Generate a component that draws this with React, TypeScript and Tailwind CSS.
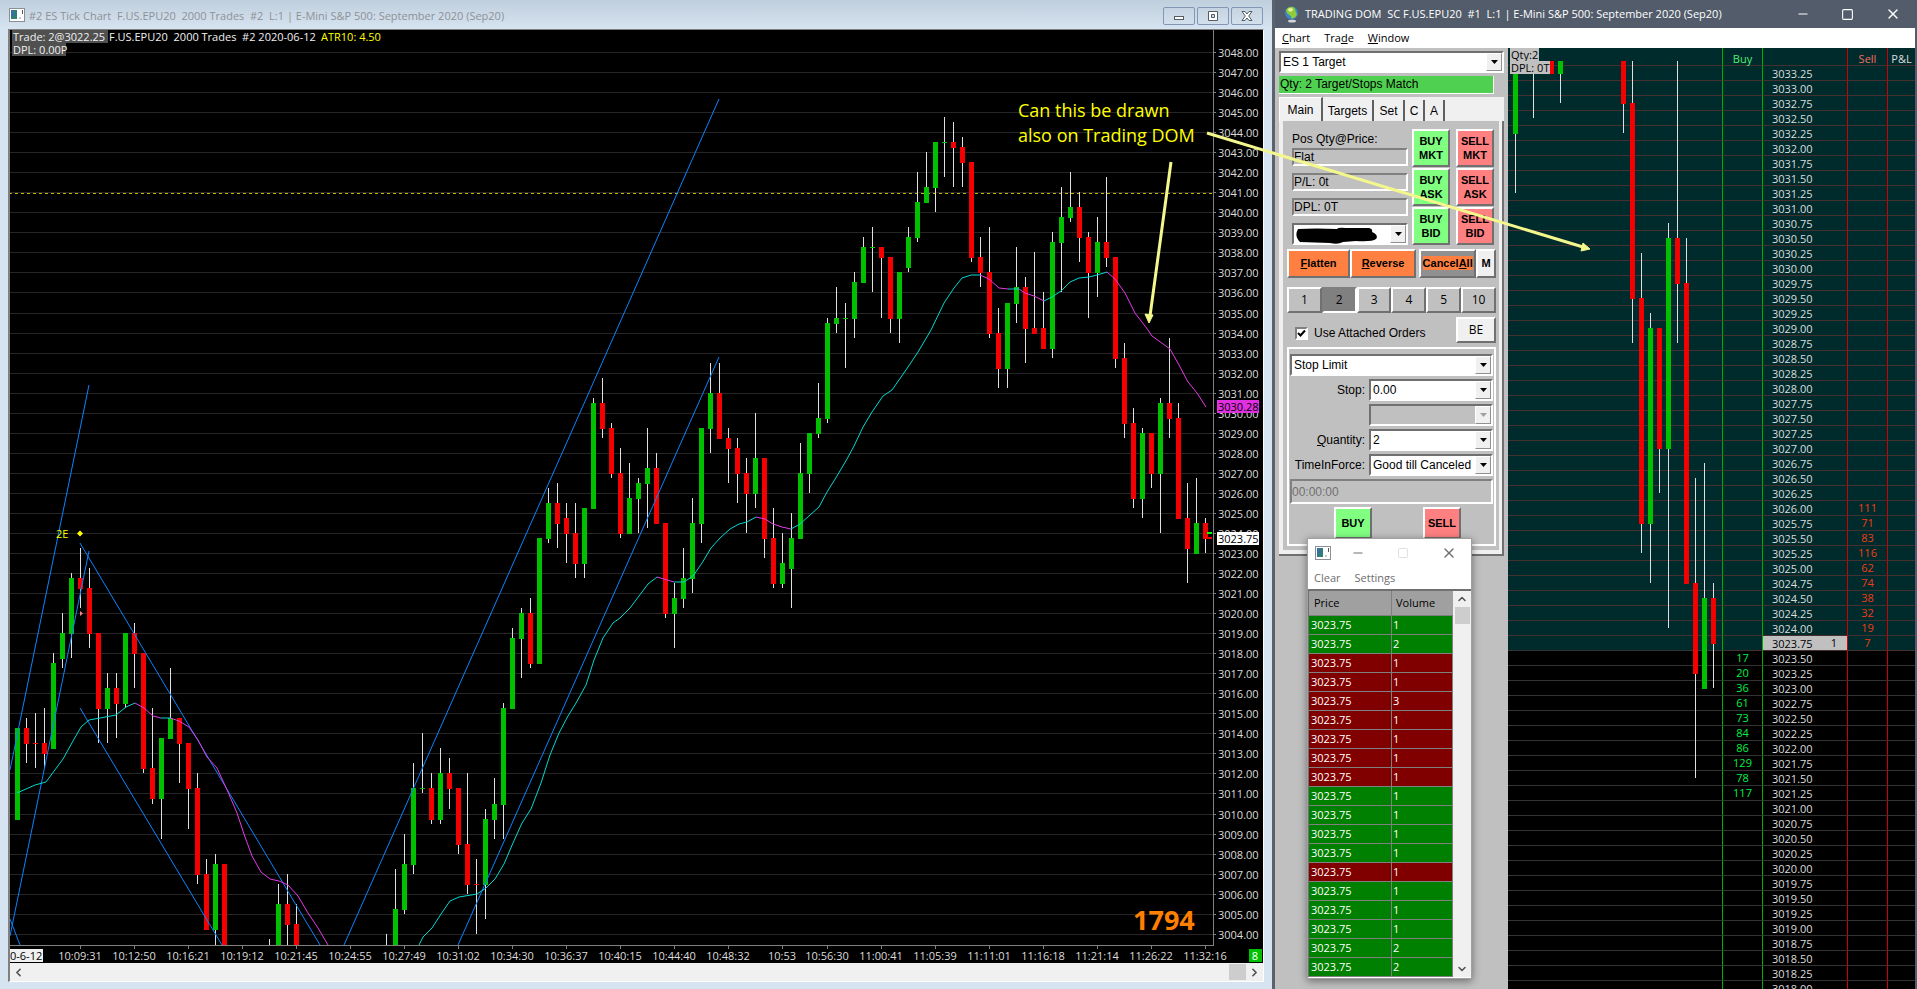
import React from 'react';
import { ChevronDown, ChevronLeft, ChevronRight, ChevronUp, Minus, Square, X } from 'lucide-react';

type Side = 'up' | 'down';
// [direction, high, body top, body bottom, low], all as points above BASE
type Candle = [Side, number, number, number, number];

const BASE = 3000;

const candles: (Candle | null)[] = [
  ['up', 14.25, 14.25, 9.75, 9.75],
  ['down', 14.75, 14.25, 13.5, 12.5],
  ['down', 15, 13.5, 13.5, 12.25],
  ['down', 15.25, 13.5, 13, 12.25],
  ['up', 18, 17.5, 13.25, 13.25],
  ['up', 20, 19, 17.75, 17.25],
  ['up', 22, 21.75, 19, 17.75],
  ['down', 23.25, 21.75, 21.25, 20.25],
  ['down', 22.25, 21.25, 19, 18.25],
  ['down', 19, 19, 15.25, 13.5],
  ['up', 17, 16.25, 15.25, 13.5],
  ['down', 17, 16.25, 15.5, 13.75],
  ['up', 19, 19, 15.5, 15.25],
  ['down', 19.5, 19, 18, 16.25],
  ['down', 18, 18, 12.25, 12],
  ['down', 15.25, 12.25, 10.75, 10.5],
  ['up', 13.75, 13.75, 10.75, 8.75],
  ['up', 17.25, 14.75, 13.75, 13.75],
  ['down', 14.75, 14.75, 13.5, 11.5],
  ['down', 13.5, 13.5, 11.25, 9.25],
  ['down', 12, 11.25, 7, 6.5],
  ['down', 7.75, 7, 4.25, 4.25],
  ['up', 8, 7.5, 4.25, 3],
  ['down', 7.5, 7.5, 3, 3],
  null,
  null,
  null,
  null,
  ['up', 3.75, 3, 2, 2],
  ['up', 6.5, 5.5, 3, 3],
  ['down', 7, 5.5, 4.5, 3],
  ['down', 5.5, 4.5, 3, 3],
  null,
  null,
  null,
  null,
  null,
  null,
  null,
  null,
  null,
  ['up', 4, 3, 2, 2],
  ['up', 7.25, 5.25, 3, 3],
  ['up', 9, 7.5, 5.25, 5],
  ['up', 12.5, 11.25, 7.5, 7],
  ['up', 14, 11.25, 11.25, 11],
  ['down', 12, 11.25, 9.75, 9.5],
  ['up', 13.25, 12, 9.75, 9.5],
  ['down', 12.75, 12, 11.25, 10.25],
  ['down', 11.25, 11.25, 8.5, 8],
  ['down', 12, 8.5, 6.5, 6],
  ['down', 7.75, 6.5, 6.5, 4],
  ['up', 10.25, 9.75, 6.5, 4.75],
  ['up', 11.75, 10.5, 9.75, 8.75],
  ['up', 15.5, 15.25, 10.5, 8.75],
  ['up', 19.25, 18.75, 15.25, 15.25],
  ['up', 20.25, 20, 18.75, 16.75],
  ['down', 20.75, 20, 17.5, 17.25],
  ['up', 23.75, 23.75, 17.5, 17.5],
  ['up', 26.25, 25.5, 23.75, 23.5],
  ['down', 26.5, 25.5, 24.5, 23.25],
  ['down', 25.5, 24.75, 24, 22.5],
  ['down', 25.5, 24, 22.5, 21.75],
  ['up', 25.25, 25.25, 22.5, 21.75],
  ['up', 30.75, 30.5, 25.25, 25.25],
  ['down', 31.75, 30.5, 29.25, 28.75],
  ['down', 29.5, 29.25, 27, 26.75],
  ['down', 28.25, 27, 24, 23.75],
  ['up', 27.5, 25.75, 24, 24],
  ['up', 26.75, 26.5, 25.75, 24],
  ['up', 29.25, 27.25, 26.5, 24.25],
  ['down', 28, 27.25, 24.5, 24.5],
  ['down', 24.5, 24.5, 20, 19.75],
  ['up', 21.5, 20.75, 20, 18.25],
  ['up', 23.25, 21.75, 20.75, 20.25],
  ['up', 25.75, 24.5, 21.75, 21],
  ['up', 29.25, 29.25, 24.5, 23.5],
  ['up', 32.5, 31, 29.25, 28],
  ['down', 32.5, 31, 28.75, 28.75],
  ['down', 29.25, 28.75, 28.25, 26.5],
  ['down', 28.75, 28.25, 27, 25.5],
  ['down', 27.75, 27, 26, 24],
  ['up', 30, 27.75, 26, 25.25],
  ['down', 27.75, 27.75, 23.75, 22.75],
  ['down', 25.25, 23.75, 21.5, 21.25],
  ['up', 24, 22.5, 21.5, 21.25],
  ['up', 25, 23.75, 22.25, 20.25],
  ['up', 28.5, 27, 23.75, 23.75],
  ['up', 29, 29, 27, 26],
  ['up', 31.5, 29.75, 29, 28.75],
  ['up', 34.75, 34.5, 29.75, 29.5],
  ['up', 36.25, 34.75, 34.5, 34],
  ['up', 35.5, 34.75, 34.75, 32.25],
  ['up', 37, 36.5, 34.75, 33.75],
  ['up', 38.75, 38.25, 36.5, 36.5],
  ['up', 39.25, 38.25, 38.25, 36],
  ['down', 38.25, 38.25, 37.75, 34.75],
  ['down', 37.75, 37.75, 34.75, 34],
  ['up', 37, 37, 34.75, 33.5],
  ['up', 39.25, 38.75, 37.25, 37],
  ['up', 42, 40.5, 38.75, 38.5],
  ['up', 43, 41.25, 40.5, 40.5],
  ['up', 43.5, 43.5, 41.25, 40],
  ['up', 44.75, 43.5, 43.5, 41.75],
  ['down', 44.5, 43.5, 43.25, 41.25],
  ['down', 43.75, 43.25, 42.5, 41.25],
  ['down', 42.5, 42.5, 37.75, 37.5],
  ['down', 38.75, 37.75, 37, 36.25],
  ['down', 39.25, 37, 34, 33.75],
  ['down', 35.25, 34, 32.25, 31.25],
  ['up', 35.5, 35.5, 32.25, 31.25],
  ['up', 38.25, 36.25, 35.5, 34.5],
  ['down', 36.75, 36.25, 34.25, 32.5],
  ['down', 38, 34.25, 34, 34],
  ['down', 36, 34.25, 33.25, 33.25],
  ['up', 39, 38.5, 33.25, 32.75],
  ['up', 41.25, 39.75, 38.5, 36],
  ['up', 42, 40.25, 39.75, 39.5],
  ['down', 41, 40.25, 38.75, 37.5],
  ['down', 39, 38.75, 37, 34.75],
  ['up', 39.75, 38.5, 37, 35.75],
  ['down', 41.75, 38.5, 37.75, 37.25],
  ['down', 37.75, 37.75, 32.75, 32.25],
  ['down', 33.5, 32.75, 29.5, 28.75],
  ['down', 30.25, 29.5, 25.75, 25.25],
  ['up', 29.25, 29, 25.75, 24.75],
  ['down', 29, 29, 27, 26.25],
  ['up', 30.75, 30.5, 27, 24],
  ['down', 33.75, 30.5, 29.75, 28.75],
  ['down', 30.5, 29.75, 24.75, 24.75],
  ['down', 26.5, 24.75, 23.25, 21.5],
  ['up', 26.75, 24.5, 23, 23],
  ['down', 24.75, 24.5, 23.75, 23],
];

// Moving average, coloured by its slope
const averageRising = [
  '17,793 35,785 46,782 63,759 73,741 81,727 89,720 100,718 116,715 126,707 135,703',
  '161,718 170,718',
  '419,945 423,937 432,928 441,914 450,901 459,897 477,894 486,888 495,879 504,864 513,843 522,823 531,809 541,783 550,755 559,733 568,716 576,703 586,685 594,660 603,638 613,623 620,618 630,608 648,584 657,577',
  '674,582 684,582 693,576 702,563 711,548 720,538 730,529 739,524 747,522 756,517',
  '791,529 800,524 810,515 819,507 827,492 837,476 847,459 854,446 863,427 872,412 883,396 892,390 908,367 918,352 931,330 944,303 954,288 962,278 971,275 980,275',
  '1008,289 1019,289',
  '1044,301 1052,297 1061,291 1070,282 1079,278 1089,277 1097,275 1107,272',
];
const averageFalling = [
  '135,703 144,708 153,716 161,718',
  '170,718 179,721 189,727 198,740 207,757 217,768 228,792 237,813 245,837 252,856 261,872 270,879 279,881 288,885 298,896 308,913 318,928 328,945',
  '657,577 674,582',
  '756,517 765,519 773,524 782,527 791,529',
  '980,275 989,279 999,288 1008,289',
  '1019,289 1025,293 1034,296 1044,301',
  '1107,272 1115,279 1125,293 1135,313 1148,330 1152,336 1170,349 1179,365 1188,382 1197,393 1206,407',
];

const trendLines = [
  [89, 385, 10, 770],
  [89, 551, 10, 936],
  [80, 543, 320, 945],
  [80, 708, 222, 945],
  [10, 919, 20, 945],
  [344, 945, 719, 99],
  [458, 945, 719, 357],
];

const timeLabels: [number, string][] = [
  [7, '10:09:31'], [13, '10:12:50'], [19, '10:16:21'], [25, '10:19:12'], [31, '10:21:45'],
  [37, '10:24:55'], [43, '10:27:49'], [49, '10:31:02'], [55, '10:34:30'], [61, '10:36:37'],
  [67, '10:40:15'], [73, '10:44:40'], [79, '10:48:32'], [85, '10:53'], [90, '10:56:30'],
  [96, '11:00:41'], [102, '11:05:39'], [108, '11:11:01'], [114, '11:16:18'], [120, '11:21:14'],
  [126, '11:26:22'], [132, '11:32:16'],
];

const buyDepth: Record<string, number> = {
  '3023.50': 17, '3023.25': 20, '3023.00': 36, '3022.75': 61, '3022.50': 73,
  '3022.25': 84, '3022.00': 86, '3021.75': 129, '3021.50': 78, '3021.25': 117,
};
const sellDepth: Record<string, number> = {
  '3026.00': 111, '3025.75': 71, '3025.50': 83, '3025.25': 116, '3025.00': 62,
  '3024.75': 74, '3024.50': 38, '3024.25': 32, '3024.00': 19, '3023.75': 7,
};

const LAST = 3023.75;
const DOM_TOP = 3033.25;
const DOM_ROWS = 62;
const domPrices = Array.from({ length: DOM_ROWS }, (_, i) => DOM_TOP - i * 0.25);

const tape: [Side, number][] = [
  ['up', 1], ['up', 2], ['down', 1], ['down', 1], ['down', 3], ['down', 1], ['down', 1],
  ['down', 1], ['down', 1], ['up', 1], ['up', 1], ['up', 1], ['up', 1], ['down', 1],
  ['up', 1], ['up', 1], ['up', 1], ['up', 2], ['up', 2],
];

const UP = '#00c000';
const DOWN = '#f40000';

const chartX = (i: number) => 17 + i * 9;
const chartY = (price: number) => Math.round(52 + (3048 - price) * 20.04);
const domX = (i: number) => 205 - (candles.length - 1 - i) * 9;
const domY = (price: number) => 25 + ((DOM_TOP - price) / 0.25) * 15;

interface CandlesProps {
  x: (i: number) => number;
  y: (price: number) => number;
  from?: number;
}

const Candles: React.FC<CandlesProps> = ({ x, y, from = 0 }) => (
  <>
    {candles.map((c, i) => {
      if (!c || i < from) return null;
      const [side, high, top, bottom, low] = c;
      const yTop = y(BASE + top);
      return (
        <g key={i}>
          <rect x={x(i)} y={y(BASE + high)} width={1} height={y(BASE + low) - y(BASE + high)} fill="#e0e0e0" />
          <rect x={x(i) - 2} y={yTop} width={5} height={y(BASE + bottom) - yTop + 1} fill={side === 'up' ? UP : DOWN} />
        </g>
      );
    })}
  </>
);

const AppIcon = () => (
  <svg width="16" height="14" viewBox="0 0 16 14" aria-hidden="true">
    <rect x="0.5" y="0.5" width="15" height="13" fill="#fff" stroke="#8a8f96" />
    <rect x="2" y="2" width="6" height="9" fill="#2f7d76" />
    <rect x="2" y="2" width="3" height="6" fill="#3b6ea5" />
    <rect x="10" y="9" width="2" height="2" fill="#c8ccd0" />
    <rect x="13" y="2" width="1" height="4" fill="#555" />
  </svg>
);

const GlobeIcon = () => (
  <svg width="15" height="17" viewBox="0 0 15 17" aria-hidden="true">
    <ellipse cx="8" cy="15" rx="4" ry="1.6" fill="#cfd6dc" />
    <circle cx="7.5" cy="7" r="6.5" fill="#3b86c8" />
    <path d="M2 4C4 1 8 0 10 1.500C12 3 11 6 13 8C12 12 9 13 7 12C8 9 4 9 3 7Z" fill="#8fcc3a" />
    <path d="M4 3C6 1.500 8 2 9 3.500C8 6 6 6 4.500 5Z" fill="#e6f39a" />
  </svg>
);

const ChartWindow = () => {
  const prices = Array.from({ length: 45 }, (_, i) => 3048 - i);
  return (
    <section className="flex min-w-0 flex-1 flex-col border-r-[3px] border-[#5b626b] bg-[#d6e3f1]">
      <header className="flex h-[29px] items-center bg-gradient-to-b from-[#c0cfdd] to-[#d6e3f1] pr-[9px] pl-[9px]">
        <AppIcon />
        <h1 className="ml-1 flex-1 pt-[3px] text-[11px] whitespace-pre text-[#8d9196]">
          #2 ES Tick Chart  F.US.EPU20  2000 Trades  #2  L:1 | E-Mini S&amp;P 500: September 2020 (Sep20)
        </h1>
        <div className="mt-[2px] flex gap-[2px]">
          {(['Minimize', 'Restore', 'Close'] as const).map((name) => (
            <button key={name} aria-label={name} className="flex h-[18px] w-8 items-center justify-center rounded-[2px] border border-[#8496b5]">
              <svg width="12" height="10" viewBox="0 0 12 10" fill="#fff" stroke="#555c66">
                {name === 'Minimize' && <rect x="1.5" y="5.5" width="9" height="3" />}
                {name === 'Restore' && <path d="M1.500 0.500H10.500V9.500H1.500ZM4.500 3.500V6.500H7.500V3.500Z" fillRule="evenodd" />}
                {name === 'Close' && <path d="M1 0.500H4L6 3L8 0.500H11L7.700 5L11 9.500H8L6 7L4 9.500H1L4.300 5Z" />}
              </svg>
            </button>
          ))}
        </div>
      </header>
      <div className="mr-2 ml-2 border-t border-r border-b border-l-2 border-t-[#808080] border-r-white border-b-white border-l-[#808080] bg-black">
        <svg viewBox="10 30 1253 933" className="block h-auto w-full" fontSize="11" role="img" aria-label="ES tick chart">
          <g shapeRendering="crispEdges">
            {prices.map((p) => (
              <rect key={p} x={9} y={chartY(p)} width={1205} height={1} fill="#262626" />
            ))}
            <line x1={9} x2={1213} y1={193.5} y2={193.5} stroke="#c8b400" strokeDasharray="3 3" />
          </g>
          <clipPath id="plot">
            <rect x={9} y={30} width={1205} height={915} />
          </clipPath>
          <g clipPath="url(#plot)">
            <g shapeRendering="crispEdges">
              <Candles x={chartX} y={chartY} />
            </g>
            <g stroke="#0a84ff" strokeWidth={1}>
              {trendLines.map(([x1, y1, x2, y2], i) => (
                <line key={i} x1={x1} y1={y1} x2={x2} y2={y2} />
              ))}
            </g>
            <g fill="none" strokeWidth={1}>
              {averageRising.map((points) => <polyline key={points} points={points} stroke="#00d8d0" />)}
              {averageFalling.map((points) => <polyline key={points} points={points} stroke="#e838e8" />)}
            </g>
          </g>
          <rect x={1207} y={532} width={5} height={2} fill="#00ff00" />
          <rect x={1207} y={537} width={5} height={2} fill={DOWN} />
          <path d="M77 533.500L80 530.500L83 533.500L80 536.500Z" fill="#ffff00" />
          <path d="M80 611L83 613.500L80 616Z" fill="#ff8080" />
          <text x={56} y={538} fill="#ffff00">2E</text>

          <rect x={1213} y={30} width={1} height={916} fill="#808080" />
          <rect x={9} y={945} width={1205} height={1} fill="#808080" />
          {prices.map((p) => (
            <g key={p}>
              <rect x={1214} y={chartY(p)} width={2} height={1} fill="#808080" />
              <text x={1218} y={chartY(p) + 5} fill="#dcdcdc">{p.toFixed(2)}</text>
            </g>
          ))}
          <rect x={1217} y={400} width={42} height={13} fill="#e030e0" />
          <text x={1218} y={411} fill="#000">3030.28</text>
          <rect x={1217} y={532} width={42} height={13} fill="#fff" />
          <text x={1218} y={543} fill="#000">3023.75</text>

          {timeLabels.map(([i, label]) => (
            <g key={label}>
              <rect x={chartX(i)} y={946} width={1} height={3} fill="#808080" />
              <text x={chartX(i)} y={960} fill="#dcdcdc" textAnchor="middle">{label}</text>
            </g>
          ))}
          <rect x={10} y={949} width={33} height={13} fill="#f0f0f0" />
          <text x={10} y={960} fill="#000">0-6-12</text>
          <rect x={1249} y={949} width={13} height={13} fill="#00c000" />
          <text x={1255} y={960} fill="#fff" textAnchor="middle">8</text>

          <rect x={12} y={30} width={96} height={13} fill="#505050" />
          <rect x={12} y={43} width={54} height={13} fill="#505050" />
          <text x={13} y={41} fill="#f0f0f0" xmlSpace="preserve">Trade: 2@3022.25</text>
          <text x={109} y={41} fill="#f0f0f0" xmlSpace="preserve">{'F.US.EPU20  2000 Trades  #2 2020-06-12'}</text>
          <text x={321} y={41} fill="#ffff00">ATR10: 4.50</text>
          <text x={13} y={54} fill="#f0f0f0">DPL: 0.00P</text>
          <text x={1133} y={930} fill="#ff8000" fontSize="27" fontWeight="bold">1794</text>
        </svg>
        <div className="flex h-[18px] items-center justify-between bg-[#f0f0f0] px-[2px] text-[#505050]">
          <button aria-label="Scroll left"><ChevronLeft size={13} strokeWidth={3} /></button>
          <div className="flex h-full items-center gap-[2px]">
            <div className="h-4 w-[17px] bg-[#cdcdcd]" />
            <button aria-label="Scroll right"><ChevronRight size={13} strokeWidth={3} /></button>
          </div>
        </div>
      </div>
    </section>
  );
};

interface ComboProps {
  id: string;
  label: string;
  value: string;
  disabled?: boolean;
  children?: React.ReactNode;
}

const Combo: React.FC<ComboProps> = ({ id, label, value, disabled, children }) => (
  <div className={`relative flex h-[22px] min-w-0 flex-1 border-2 border-t-[#707070] border-r-white border-b-white border-l-[#707070] ${disabled ? 'bg-[#c0c0c0]' : 'bg-white'}`}>
    <select id={id} aria-label={label} disabled={disabled} className="w-full appearance-none overflow-hidden pr-4 pl-[2px] text-[12px] leading-[17px] text-black outline-none">
      <option>{value}</option>
    </select>
    {children}
    <span className="pointer-events-none absolute top-0 right-0 bottom-0 flex w-4 items-center justify-center border border-t-white border-r-[#909090] border-b-[#909090] border-l-white bg-[#f0f0f0]">
      <svg width="7" height="4" viewBox="0 0 7 4" fill={disabled ? '#a0a0a0' : '#000'}><path d="M0 0H7L3.500 4Z" /></svg>
    </span>
  </div>
);

const raised = 'border-2 border-t-white border-r-[#707070] border-b-[#707070] border-l-white';
const sunken = 'border-2 border-t-[#808080] border-r-white border-b-white border-l-[#808080]';

const TradePanel = () => (
  <aside className="w-[233px] shrink-0 bg-[#c0c0c0] pt-[3px] pr-1 pl-1 font-['Liberation_Sans',sans-serif] text-[12px] text-black">
    <div className="flex"><Combo id="config" label="Trade configuration" value="ES 1 Target" /></div>
    <p className="mt-[3px] mr-[10px] h-[18px] border-r border-b border-white bg-[#50d050] pl-px leading-[17px]">Qty: 2 Target/Stops Match</p>

    <div className="mt-[3px] flex h-6 items-end bg-[#f0f0f0]" role="tablist">
      <button role="tab" aria-selected="true" className="h-6 w-[44px] border-t border-r-2 border-l border-t-white border-r-[#606060] border-l-white bg-[#f0f0f0]">Main</button>
      <button role="tab" aria-selected="false" className="h-[21px] w-[51px] border-r-2 border-[#606060]">Targets</button>
      <button role="tab" aria-selected="false" className="h-[21px] w-[31px] border-r-2 border-[#606060]">Set</button>
      <button role="tab" aria-selected="false" className="h-[21px] w-5 border-r-2 border-[#606060]">C</button>
      <button role="tab" aria-selected="false" className="h-[21px] w-5 border-r-2 border-[#606060]">A</button>
    </div>

    <div className="border-r-2 border-b-2 border-[#707070]">
      <div className="border-r-[3px] border-b-4 border-l-4 border-[#f0f0f0] pr-[3px] pb-1 pl-1">
        <div className="flex gap-1 pt-2 pl-[5px]">
          <div className="flex w-[116px] flex-col gap-[7px]">
            <div>
              <label htmlFor="pos" className="block h-[19px] leading-[21px]">Pos Qty@Price:</label>
              <input id="pos" readOnly value="Flat" className={`block h-[18px] w-full ${sunken}`} />
            </div>
            <input aria-label="P/L" readOnly value="P/L: 0t" className={`block h-[18px] w-full ${sunken}`} />
            <input aria-label="DPL" readOnly value="DPL: 0T" className={`block h-[18px] w-full ${sunken}`} />
            <div className="flex">
              <Combo id="account" label="Account" value="">
                <svg className="absolute top-[2px] left-[2px]" width="83" height="17" viewBox="0 0 83 17"><path d="M2 2Q20 1 41 2Q42 0 50 1L73 1Q77 2 76 5Q83 8 80 12Q76 15 60 14L47 15Q42 18 34 16L4 15Q-2 9 2 2Z" /></svg>
              </Combo>
            </div>
          </div>
          <div className="grid grid-cols-[38px_38px] gap-x-[6px] gap-y-[1px]">
            {['MKT', 'ASK', 'BID'].map((kind) => (
              <React.Fragment key={kind}>
                <button className={`h-[38px] bg-[#80ff80] text-[11px] leading-[14px] font-bold ${raised}`}>BUY<br />{kind}</button>
                <button className={`h-[38px] bg-[#ff8080] text-[11px] leading-[14px] font-bold ${raised}`}>SELL<br />{kind}</button>
              </React.Fragment>
            ))}
          </div>
        </div>

        <div className="mt-1 flex h-[29px] text-[11px] font-bold">
          <button className={`w-16 bg-[#ff8040] ${raised}`}><u>F</u>latten</button>
          <button className={`w-[67px] bg-[#ff8040] ${raised}`}><u>R</u>everse</button>
          <button className={`ml-[3px] w-[58px] bg-[#909090] ${raised}`}><span className="bg-[#ff8040] py-px">Cancel<u>A</u>ll</span></button>
          <button className={`w-5 bg-[#f0f0f0] ${raised}`}>M</button>
        </div>

        <div className="mt-[9px] grid h-[26px] grid-cols-6">
          {[1, 2, 3, 4, 5, 10].map((n) => (
            <button key={n} className={n === 2 ? `bg-[#808080] font-['Open_Sans',sans-serif] ${sunken}` : `font-['Open_Sans',sans-serif] ${raised}`}>{n}</button>
          ))}
        </div>

        <div className="mt-1 flex h-[26px] items-center justify-between">
          <label className="flex items-center gap-[6px] pt-[6px] pl-2">
            <span className="relative flex">
              <input type="checkbox" defaultChecked className={`h-[13px] w-[13px] appearance-none bg-white ${sunken}`} />
              <svg className="pointer-events-none absolute top-[2px] left-[2px]" width="9" height="9" viewBox="0 0 9 9" fill="none" stroke="#000" strokeWidth="2"><path d="M1 4L3.500 6.500L8 1.500" /></svg>
            </span>
            Use Attached Orders
          </label>
          <button className={`h-[26px] w-10 bg-[#f0f0f0] font-['Open_Sans',sans-serif] ${raised}`}>BE</button>
        </div>

        <div className="mt-1 border-2 border-white p-[5px_1px_5px_1px]">
          <div className="flex flex-col gap-[3px]">
            <Row><Combo id="type" label="Order type" value="Stop Limit" /></Row>
            <Row label={<>Stop:</>} htmlFor="stop"><Combo id="stop" label="Stop" value="0.00" /></Row>
            <Row label=" "><Combo id="extra" label="Limit" value="" disabled /></Row>
            <Row label={<><u>Q</u>uantity:</>} htmlFor="qty"><Combo id="qty" label="Quantity" value="2" /></Row>
            <Row label="TimeInForce:" htmlFor="tif"><Combo id="tif" label="TimeInForce" value="Good till Canceled" /></Row>
            <input aria-label="Good till time" disabled value="00:00:00" className={`h-[25px] text-[#707070] ${sunken}`} />
            <div className="flex justify-between pr-8 pl-[44px] text-[11px] font-bold">
              <button className={`h-8 w-[38px] bg-[#80ff80] ${raised}`}>BUY</button>
              <button className={`h-8 w-[38px] bg-[#ff8080] ${raised}`}>SELL</button>
            </div>
          </div>
        </div>
      </div>
    </div>
  </aside>
);

interface RowProps {
  label?: React.ReactNode;
  htmlFor?: string;
  children: React.ReactNode;
}

const Row: React.FC<RowProps> = ({ label, htmlFor, children }) => (
  <div className="flex items-center">
    {label && <label htmlFor={htmlFor} className="w-[79px] shrink-0 pr-1 text-right whitespace-nowrap">{label}</label>}
    {children}
  </div>
);

const TapeWindow = () => (
  <section className="absolute top-[538px] left-8 w-[165px] border border-[#a0a0a0] bg-white pb-px shadow-[0_2px_8px_rgba(0,0,0,0.45)]">
    <header className="flex h-7 items-center pl-[7px] text-[#707070]">
      <AppIcon />
      <button aria-label="Minimize" className="ml-5"><Minus size={14} strokeWidth={2} /></button>
      <button aria-label="Maximize" disabled className="ml-8 text-[#e0e0e0]"><Square size={12} strokeWidth={2} /></button>
      <button aria-label="Close" className="ml-8"><X size={16} strokeWidth={2} /></button>
    </header>
    <nav className="flex h-[22px] gap-[14px] pl-[6px] text-[11px] leading-[22px] text-[#6d6d6d]">
      <button>Clear</button>
      <button>Settings</button>
    </nav>
    <div className="flex border-t-2 border-l border-t-[#707070] border-l-[#707070]">
      <table className="w-[144px] table-fixed border-separate border-spacing-0 text-[11px] text-white">
        <thead>
          <tr className="bg-[#a0a0a0] text-left text-black">
            <th className="h-[25px] w-[83px] border-r border-b border-[#808080] pl-[5px] font-normal">Price</th>
            <th className="border-b border-[#808080] pl-1 font-normal">Volume</th>
          </tr>
        </thead>
        <tbody>
          {tape.map(([side, volume], i) => (
            <tr key={i} className={side === 'up' ? 'bg-[#008000]' : 'bg-[#800000]'}>
              <td className="h-[19px] border-r border-b border-[#808080] pl-[2px] leading-[18px]">3023.75</td>
              <td className="h-[19px] border-r border-b border-[#808080] pl-[1px] leading-[18px]">{volume}</td>
            </tr>
          ))}
        </tbody>
      </table>
      <div className="flex flex-1 flex-col items-center bg-[#f0f0f0] text-[#505050]">
        <button aria-label="Scroll up" className="flex h-4 items-center"><ChevronUp size={12} strokeWidth={3} /></button>
        <div className="h-[17px] w-[15px] bg-[#cdcdcd]" />
        <button aria-label="Scroll down" className="mt-auto flex h-4 items-center"><ChevronDown size={12} strokeWidth={3} /></button>
      </div>
    </div>
  </section>
);

const DomLadder = () => (
  <div className="relative flex min-w-0 flex-1 items-start overflow-hidden bg-black text-[11px] text-[#dcdcdc]">
    <svg width="214" height="948" viewBox="0 0 214 948" className="shrink-0" shapeRendering="crispEdges" role="img" aria-label="DOM chart">
      <rect width="214" height="603" fill="#002b2d" />
      {Array.from({ length: DOM_ROWS + 1 }, (_, i) => (
        <rect key={i} x={0} y={17 + i * 15} width={214} height={1} fill={i < 39 ? '#453030' : '#333'} />
      ))}
      <clipPath id="dom-plot">
        <rect y={13} width={214} height={935} />
      </clipPath>
      <g clipPath="url(#dom-plot)">
        <Candles x={domX} y={domY} from={110} />
      </g>
    </svg>
    <table className="w-full table-fixed border-separate border-spacing-0 text-center">
      <thead>
        <tr className="bg-[#002b2d]">
          <th className="h-[18px] w-[41px] border-r border-b border-l border-r-[#00b000] border-b-[#453030] border-l-[#00b000] pt-1 leading-[13px] font-normal text-[#50f070]">Buy</th>
          <th className="w-[58px] border-b border-[#453030]" />
          <th className="w-[26px] border-b border-[#453030]" />
          <th className="w-[41px] border-r border-b border-l border-r-[#d00000] border-b-[#453030] border-l-[#d00000] pt-1 leading-[13px] font-normal text-[#f07060]">Sell</th>
          <th className="border-b border-[#453030] pt-1 leading-[13px] font-normal">P&amp;L</th>
        </tr>
      </thead>
      <tbody>
        {domPrices.map((price) => {
          const key = price.toFixed(2);
          const above = price >= LAST;
          const last = price === LAST;
          const line = above ? 'border-b-[#453030]' : 'border-b-[#333]';
          return (
            <tr key={key} className={above ? 'bg-[#002b2d]' : 'bg-black'}>
              <td className={`h-[15px] border-r border-b border-l border-r-[#00b000] border-l-[#00b000] leading-[14px] text-[#00f040] ${line}`}>{buyDepth[key]}</td>
              <td className={`border-b pt-[2px] pl-[9px] text-left leading-[12px] ${line} ${last ? 'bg-[#c0c0c0] text-black' : ''}`}>{key}</td>
              <td className={`border-b leading-[14px] ${line} ${last ? 'bg-[#c0c0c0] text-black' : ''}`}>{last ? 1 : ''}</td>
              <td className={`border-r border-b border-l border-r-[#d00000] border-l-[#d00000] leading-[14px] text-[#f03c14] ${line}`}>{sellDepth[key]}</td>
              <td className={`border-b ${line}`} />
            </tr>
          );
        })}
      </tbody>
    </table>
    <div className="absolute top-0 left-[2px] flex flex-col items-start leading-[13px] text-black">
      <span className="bg-[#c0c0c0] px-px">Qty:2</span>
      <span className="bg-[#c0c0c0] px-px">DPL: 0T</span>
    </div>
  </div>
);

const DomWindow = () => (
  <section className="relative flex w-[642px] shrink-0 flex-col border-r-2 border-[#525c6b]">
    <header className="flex h-7 shrink-0 items-center bg-[#525c6b] pr-[14px] pl-[9px] text-white">
      <GlobeIcon />
      <h1 className="ml-[6px] flex-1 text-[11px] whitespace-pre">
        TRADING DOM  SC F.US.EPU20  #1  L:1 | E-Mini S&amp;P 500: September 2020 (Sep20)
      </h1>
      <div className="flex items-center gap-[31px]">
        <button aria-label="Minimize"><Minus size={14} strokeWidth={2} /></button>
        <button aria-label="Maximize"><Square size={13} strokeWidth={2} /></button>
        <button aria-label="Close"><X size={16} strokeWidth={2} /></button>
      </div>
    </header>
    <nav className="flex h-5 shrink-0 items-center gap-[14px] bg-white pl-[7px] text-[11px] text-black">
      <button><u>C</u>hart</button>
      <button>Tra<u>d</u>e</button>
      <button><u>W</u>indow</button>
    </nav>
    <div className="flex min-h-0 flex-1">
      <TradePanel />
      <DomLadder />
    </div>
    <TapeWindow />
  </section>
);

// Hand-drawn note that sits on top of both windows
const Annotation = () => (
  <div className="pointer-events-none absolute top-0 right-0">
    <svg width="917" height="400" viewBox="1000 0 917 400" stroke="#f4f88c" fill="#f4f88c" strokeWidth="3">
      <line x1="1171" y1="162" x2="1150" y2="316" />
      <path d="M1149 323L1145 314L1153 315Z" strokeWidth="1" />
      <line x1="1207" y1="133" x2="1583" y2="247" />
      <path d="M1590 249L1581 251L1583 243Z" strokeWidth="1" />
    </svg>
    <p className="absolute top-[98px] left-[18px] text-[18px] leading-[25px] whitespace-pre text-[#ffff00]">
      Can this be drawn{'\n'}also on Trading DOM
    </p>
  </div>
);

export default function App() {
  return (
    <main className="relative flex h-screen overflow-hidden bg-[#d6e3f1] font-['Open_Sans',sans-serif]">
      <ChartWindow />
      <DomWindow />
      <Annotation />
    </main>
  );
}
